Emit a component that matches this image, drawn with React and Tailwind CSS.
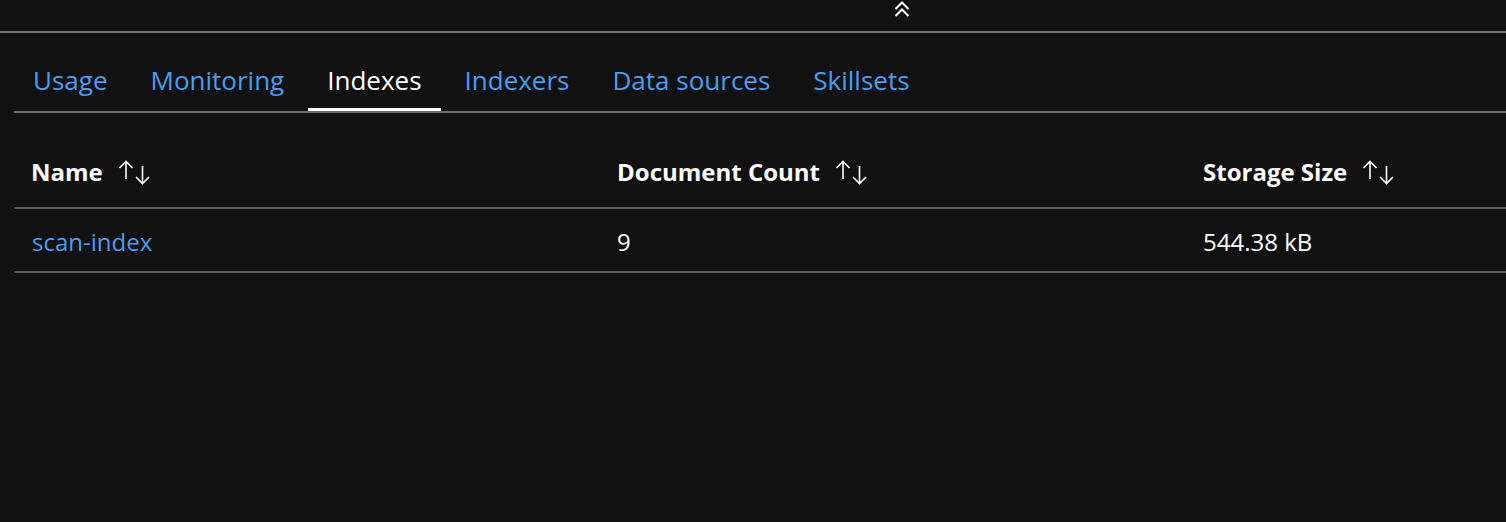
import React from "react";

const SortIcon = () => (
  <svg width="33" height="25" viewBox="0 0 33 25" fill="none" stroke="#ffffff" strokeWidth="1.6" className="shrink-0">
    <path d="M8 1.5 V19 M1.5 8 L8 1.5 L14.5 8" />
    <path d="M24.5 6 V23.5 M18 17 L24.5 23.5 L31 17" />
  </svg>
);

const tabs = ["Usage", "Monitoring", "Indexes", "Indexers", "Data sources", "Skillsets"];

export default function App() {
  return (
    <div className="w-[1506px] h-[522px] bg-[#111111] overflow-hidden" style={{ fontFamily: '"Open Sans", "Noto Sans", sans-serif' }}>
      <div className="h-[31px] flex justify-start items-start pl-[894px]">
        <svg width="16" height="17" viewBox="0 0 16 17" fill="none" stroke="#ffffff" strokeWidth="2" className="mt-[1px]">
          <path d="M1.5 8 L8 1.5 L14.5 8" />
          <path d="M1.5 15 L8 8.5 L14.5 15" />
        </svg>
      </div>
      <div className="h-[2px] bg-[#767676]" />
      <div className="pl-[14px]">
        <div className="flex gap-[5px] h-[80px] items-end border-b-2 border-[#6e6e6e]">
          {tabs.map((t) => {
            const active = t === "Indexes";
            return (
              <div key={t} className="flex flex-col items-stretch">
                <div className={`px-[19px] pb-[10px] text-[26px] leading-[36px] ${active ? "text-white" : "text-[#479ef5]"}`}>{t}</div>
                <div className={`h-[3px] ${active ? "bg-white" : "bg-transparent"}`} />
              </div>
            );
          })}
        </div>
        <div className="grid grid-cols-[586px_586px_1fr] h-[96px] items-center border-b-2 border-[#5a5a5a] text-white font-bold text-[24px]">
          {["Name", "Document Count", "Storage Size"].map((h) => (
            <div key={h} className="flex items-center gap-[15px] pl-[17px] pt-[24px]">
              <span>{h}</span>
              <SortIcon />
            </div>
          ))}
        </div>
        <div className="grid grid-cols-[586px_586px_1fr] h-[64px] items-center border-b-2 border-[#5a5a5a] text-[24px] text-white">
          <div className="pl-[18px] pt-[4px] text-[#479ef5]">scan-index</div>
          <div className="pl-[17px] pt-[4px]">9</div>
          <div className="pl-[17px] pt-[4px]">544.38 kB</div>
        </div>
      </div>
    </div>
  );
}
